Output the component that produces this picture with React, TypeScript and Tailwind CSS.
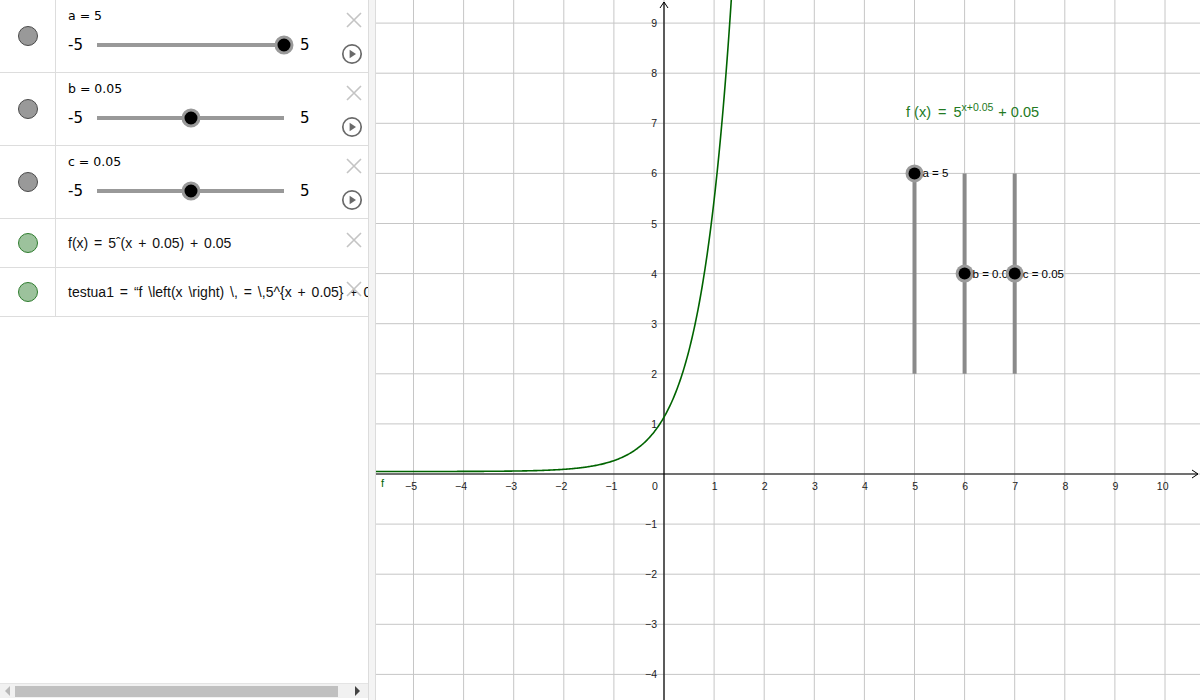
import React from 'react';

const UNIT = 50.1;
const OX = 288; // origin x inside graph svg
const OY = 474; // origin y

const px = (x: number) => OX + x * UNIT;
const py = (y: number) => OY - y * UNIT;

function curvePath() {
  const pts: string[] = [];
  for (let x = -5.8; x <= 1.4; x += 0.02) {
    const y = Math.pow(5, x + 0.05) + 0.05;
    pts.push(`${pts.length ? 'L' : 'M'}${px(x).toFixed(2)},${py(y).toFixed(2)}`);
  }
  return pts.join(' ');
}

function Dot({ green }: { green?: boolean }) {
  return (
    <div
      className={`w-5 h-5 rounded-full border ${
        green ? 'bg-[#9cc29c] border-[#2f7d2f]' : 'bg-[#999999] border-[#4a4a4a]'
      }`}
    />
  );
}

function CloseIcon() {
  return (
    <svg width="18" height="18" viewBox="0 0 18 18" className="block">
      <path d="M2 2 L16 16 M16 2 L2 16" stroke="#c4c4c4" strokeWidth="1.6" />
    </svg>
  );
}

function PlayIcon() {
  return (
    <svg width="22" height="22" viewBox="0 0 22 22" className="block">
      <circle cx="11" cy="11" r="9.2" fill="none" stroke="#6a6a6a" strokeWidth="1.7" />
      <path d="M8.6 6.8 L15 11 L8.6 15.2 Z" fill="#6a6a6a" />
    </svg>
  );
}

function SliderRow({ label, value }: { label: string; value: number }) {
  const pct = ((value + 5) / 10) * 100;
  return (
    <div className="flex h-[73px] border-b border-[#dddddd]">
      <div className="w-[56px] shrink-0 flex items-center justify-center border-r border-[#dddddd]">
        <Dot />
      </div>
      <div className="flex-1 relative pl-[12px] pt-[8px]">
        <div className="text-[12.5px] text-black leading-[16px]">{label}</div>
        <div className="flex items-center mt-[12px] h-[18px]">
          <span className="text-[15px] w-[29px]">-5</span>
          <div className="relative w-[187px] h-[4px] bg-[#999999]">
            <div
              className="absolute top-1/2 w-[19px] h-[19px] -translate-x-1/2 -translate-y-1/2 rounded-full bg-black border-[3px] border-[#999999]"
              style={{ left: `${pct}%` }}
            />
          </div>
          <span className="text-[15px] ml-[16px]">5</span>
        </div>
        <div className="absolute right-[5px] top-[11px]">
          <CloseIcon />
        </div>
        <div className="absolute right-[5px] top-[43px]">
          <PlayIcon />
        </div>
      </div>
    </div>
  );
}

function TextRow({ text }: { text: string }) {
  return (
    <div className="flex h-[49px] border-b border-[#dddddd]">
      <div className="w-[56px] shrink-0 flex items-center justify-center border-r border-[#dddddd]">
        <Dot green />
      </div>
      <div className="flex-1 relative overflow-hidden flex items-center pl-[12px]">
        <span
          className="whitespace-pre text-[14px] text-[#111]"
          style={{ fontFamily: '"Liberation Sans", Arial, sans-serif', wordSpacing: '2px' }}
        >
          {text}
        </span>
        <div className="absolute right-[5px] top-[12px]">
          <CloseIcon />
        </div>
      </div>
    </div>
  );
}

function Graph() {
  const xs = Array.from({ length: 16 }, (_, i) => i - 5);
  const ys = Array.from({ length: 14 }, (_, i) => i - 4);
  const axisFont = { fontFamily: '"Liberation Sans", Arial, sans-serif', fontSize: 10.5 };
  const sliders = [
    { x: 5, v: 6, label: 'a = 5' },
    { x: 6, v: 4, label: 'b = 0.05' },
    { x: 7, v: 4, label: 'c = 0.05' },
  ];
  return (
    <svg width="824" height="700" className="block">
      <rect width="824" height="700" fill="#ffffff" />
      {xs.map((k) => (
        <line key={`gx${k}`} x1={px(k)} y1={0} x2={px(k)} y2={700} stroke="#c6c6c6" strokeWidth="1" />
      ))}
      {ys.map((k) => (
        <line key={`gy${k}`} x1={0} y1={py(k)} x2={824} y2={py(k)} stroke="#c6c6c6" strokeWidth="1" />
      ))}
      {/* axes */}
      <line x1={0} y1={OY} x2={822} y2={OY} stroke="#000" strokeWidth="1.2" />
      <path d={`M816,${OY - 4} L822,${OY} L816,${OY + 4}`} fill="none" stroke="#000" strokeWidth="1" />
      <line x1={OX} y1={2} x2={OX} y2={700} stroke="#000" strokeWidth="1.2" />
      <path d={`M${OX - 4},8 L${OX},2 L${OX + 4},8`} fill="none" stroke="#000" strokeWidth="1" />
      {xs
        .filter((k) => k !== 0)
        .map((k) => (
          <text
            key={`lx${k}`}
            x={px(k) + 3.5}
            y={OY + 16}
            textAnchor="end"
            fill="#222"
            style={axisFont}
          >
            {k < 0 ? `\u2212${-k}` : k}
          </text>
        ))}
      <text x={OX - 12} y={OY + 16} fill="#222" style={axisFont}>
        0
      </text>
      {ys
        .filter((k) => k !== 0)
        .map((k) => (
          <text
            key={`ly${k}`}
            x={OX - 7}
            y={py(k) + 4}
            textAnchor="end"
            fill="#222"
            style={axisFont}
          >
            {k < 0 ? `\u2212${-k}` : k}
          </text>
        ))}
      {/* curve */}
      <path d={curvePath()} fill="none" stroke="#006400" strokeWidth="1.6" />
      <text x={5} y={OY + 13} fill="#006400" style={{ fontFamily: '"Liberation Sans", sans-serif', fontSize: 11 }}>
        f
      </text>
      <text
        x={530}
        y={117}
        fill="#237a23"
        style={{ fontFamily: '"Liberation Sans", sans-serif', fontSize: 14.5 }}
      >
        <tspan>f (x)</tspan>
        <tspan dx={7}>=</tspan>
        <tspan dx={7}>5</tspan>
        <tspan dy={-6} style={{ fontSize: 10.5 }}>
          x+0.05
        </tspan>
        <tspan dy={6} dx={5}>+</tspan>
        <tspan dx={4}>0.05</tspan>
      </text>
      {/* sliders on the canvas */}
      {sliders.map((s) => (
        <g key={s.label}>
          <line x1={px(s.x)} y1={py(6)} x2={px(s.x)} y2={py(2)} stroke="#8a8a8a" strokeWidth="4" />
          <circle cx={px(s.x)} cy={py(s.v)} r={9} fill="#9a9a9a" />
          <circle cx={px(s.x)} cy={py(s.v)} r={6} fill="#000" />
          <text
            x={px(s.x) + 8}
            y={py(s.v) + 4}
            fill="#000"
            style={{ fontFamily: '"Liberation Sans", sans-serif', fontSize: 11.5 }}
          >
            {s.label}
          </text>
        </g>
      ))}
    </svg>
  );
}

export default function App() {
  return (
    <div
      className="w-[1200px] h-[700px] flex overflow-hidden bg-white text-black"
      style={{ fontFamily: '"DejaVu Sans", "Liberation Sans", sans-serif' }}
    >
      {/* Algebra view */}
      <div className="w-[368px] shrink-0 flex flex-col">
        <div className="flex-1 flex flex-col">
          <SliderRow label="a = 5" value={5} />
          <SliderRow label="b = 0.05" value={0.05} />
          <SliderRow label="c = 0.05" value={0.05} />
          <TextRow text="f(x) = 5ˆ(x + 0.05) + 0.05" />
          <TextRow text="testua1 = “f \left(x \right) \, = \,5^{x + 0.05} + 0.05”" />
        </div>
        <div className="h-[15px] mb-[2px] flex items-center bg-[#f1f1f1] border-t border-[#e4e4e4]">
          <div className="w-[15px] flex items-center justify-center">
            <div className="w-0 h-0 border-y-[5px] border-y-transparent border-r-[5px] border-r-[#b8b8b8]" />
          </div>
          <div className="flex-1 h-[11px] bg-[#c0c0c0]" />
          <div className="w-[30px] flex items-center justify-end pr-[8px]">
            <div className="w-0 h-0 border-y-[5px] border-y-transparent border-l-[5px] border-l-[#444]" />
          </div>
        </div>
      </div>
      {/* splitter */}
      <div className="w-[8px] shrink-0 bg-[#f4f4f4] border-x border-[#dcdcdc]" />
      {/* Graphics view */}
      <div className="flex-1">
        <Graph />
      </div>
    </div>
  );
}
